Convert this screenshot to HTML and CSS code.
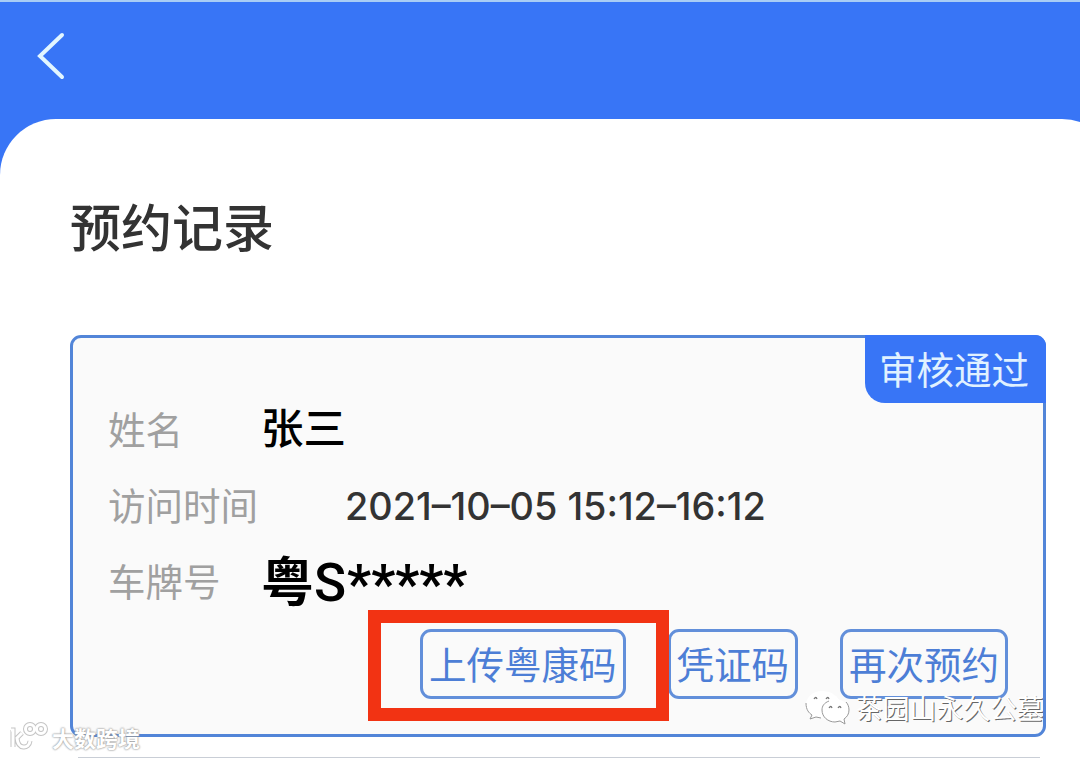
FILE: index.html
```
<!DOCTYPE html>
<html lang="zh-CN">
<head>
  <meta charset="UTF-8">
  <meta name="viewport" content="width=device-width, initial-scale=1.0">
  <title>预约记录</title>
  <link rel="stylesheet" href="styles.css">
</head>
<body>
  <div class="page">
    <div class="header">
      <svg class="back" width="30" height="50" viewBox="0 0 30 50">
        <path d="M26 4 L4 25 L26 46" />
      </svg>
    </div>

    <div class="sheet">
      <h1 class="title">预约记录</h1>

      <div class="card">
        <div class="status">审核通过</div>

        <div class="row">
          <span class="label">姓名</span>
          <span class="value name">张三</span>
        </div>
        <div class="row">
          <span class="label">访问时间</span>
          <span class="value time">2021–10–05 15:12–16:12</span>
        </div>
        <div class="row">
          <span class="label">车牌号</span>
          <span class="value plate"><b>粤</b><span class="letter">S</span><span class="stars">*****</span></span>
        </div>

        <div class="actions">
          <div class="btn upload">上传粤康码<span class="mark"></span></div>
          <div class="btn">凭证码</div>
          <div class="btn">再次预约</div>
        </div>
      </div>

      <div class="next-card"></div>
    </div>

    <!-- Watermarks -->
    <div class="wechat">
      <svg width="46" height="38" viewBox="0 0 46 38">
        <path class="bubble" d="M17 1 C8 1 1 7 1 15 C1 20 4 23 7 25 L5 29 L11 27 L18 28 C15 17 24 9 34 10 C32 5 25 1 17 1 Z" />
        <path class="outline" d="M1 13 C1 20 4 23 7 25 L5 29 L11 27 L16 28" />
        <path class="bubble" d="M30 9 C22 9 17 14 17 20 C17 27 23 32 30 32 L35 31 L40 34 L39 29 C42 27 44 24 44 20 C44 14 38 9 30 9 Z" />
        <path class="outline" d="M24 11 C19 13 17 16 17 20 C17 27 23 32 30 32 L35 31 L40 34 L39 29 C42 27 44 24 44 20 C44 17 43 14 41 12" />
        <path class="eye" d="M9 9 q2 -3 3 0 M21 9 q2 -3 3 0 M24 18 q2 -3 3 0 M33 18 q2 -3 3 0" />
      </svg>
      <span>茶园山永久公墓</span>
    </div>
    <div class="brand">
      <svg width="40" height="30" viewBox="0 0 40 30">
        <g class="logo-shade">
          <path d="M2 8 H4 V25 M13 11 L8 16 C9 28 20 27 21 19" />
          <circle cx="21" cy="7" r="4.5" />
          <circle cx="32" cy="7" r="4.5" />
        </g>
        <g class="logo-light">
          <path d="M2 8 H4 V25 M13 11 L8 16 C9 28 20 27 21 19" />
          <circle cx="21" cy="7" r="4.5" />
          <circle cx="32" cy="7" r="4.5" />
        </g>
      </svg>
      <span>大数跨境</span>
    </div>
  </div>
</body>
</html>
```
FILE: styles.css
```
* {
  box-sizing: border-box;
}
body {
  margin: 0;
  font-family: "Noto Sans CJK SC", sans-serif;
  background-color: #fff;
  color: #333;
}
.page {
  position: relative;
  height: 758px;
  overflow: hidden;
  background-color: #3875f6;
  border-top: 2px solid #a9cdf5;
}
.header {
  height: 117px;
  padding: 29px 0 0 36px;
}
.back {
  display: block;
  fill: none;
  stroke: #e2f6ff;
  stroke-width: 4;
  stroke-linecap: round;
}
.sheet {
  width: 1118px;
  height: 640px;
  padding: 69px 72px 0 70px;
  background-color: #fff;
  border-radius: 56px 56px 0 0;
}
.title {
  margin: 0 0 73px 0;
  font-size: 51px;
  line-height: 74px;
  font-weight: 500;
}
.card {
  position: relative;
  width: 976px;
  height: 402px;
  padding: 51px 35px 0 35px;
  background-color: #fafafa;
  border: 3px solid #5285d8;
  border-radius: 11px;
}
.status {
  position: absolute;
  top: -3px;
  right: -3px;
  width: 181px;
  height: 68px;
  padding-left: 14px;
  background-color: #3875f6;
  border-radius: 0 11px 0 20px;
  color: #e0f1ff;
  font-size: 37.5px;
  line-height: 66px;
}
.row {
  display: flex;
  align-items: center;
  height: 76px;
  white-space: nowrap;
}
.label {
  width: 153px;
  color: #a0a0a0;
  font-size: 37.5px;
}
.name {
  margin-bottom: 4px;
  color: #000;
  font-size: 42.5px;
  font-weight: 500;
}
.time {
  margin: 5px 0 0 84px;
  font-family: Inter, "Liberation Sans", sans-serif;
  font-size: 37.8px;
  font-weight: 500;
}
.plate {
  display: flex;
  align-items: center;
  color: #000;
  font-size: 53px;
  line-height: 76px;
}
.letter {
  margin: 8px 1px 0 0;
}
.letter,
.stars {
  font-family: Roboto, "Liberation Sans", sans-serif;
  font-weight: 500;
}
.stars {
  margin-top: 10px;
  font-weight: 700;
  font-size: 53px;
}
.actions {
  display: flex;
  justify-content: flex-end;
  gap: 42px;
  margin-top: 12px;
}
.btn {
  position: relative;
  height: 70px;
  padding: 0 6px;
  border: 3px solid #628fda;
  border-radius: 11px;
  color: #4d7ed6;
  font-size: 37.5px;
  line-height: 61px;
  white-space: nowrap;
}
.mark {
  position: absolute;
  z-index: 1;
  top: -22px;
  left: -55px;
  width: 301px;
  height: 111px;
  border: 13px solid #f23313;
}
.next-card {
  width: 962px;
  margin: 20px 0 0 8px;
  border-top: 2px solid #c9ced6;
}
.wechat {
  position: absolute;
  left: 805px;
  top: 688px;
  display: flex;
  align-items: center;
  gap: 5px;
  color: #fff;
  font-size: 26.8px;
  line-height: 34px;
  text-shadow: 1px 1px 0 #666;
}
.wechat span {
  margin-top: -2px;
}
.bubble {
  fill: #fff;
}
.outline {
  fill: none;
  stroke: #999;
  stroke-width: 1;
}
.eye {
  fill: none;
  stroke: #777;
  stroke-width: 1.3;
}
.brand {
  position: absolute;
  left: 9px;
  top: 720px;
  display: flex;
  align-items: center;
  gap: 3px;
  color: #fff;
  font-size: 22px;
  font-weight: 700;
  line-height: 30px;
  text-shadow: 0 0 2px #999, 0 0 2px #999;
}
.logo-shade,
.logo-light {
  fill: none;
  stroke: #c4c4c4;
  stroke-width: 5;
}
.logo-light {
  stroke: #fff;
  stroke-width: 3;
}
```
